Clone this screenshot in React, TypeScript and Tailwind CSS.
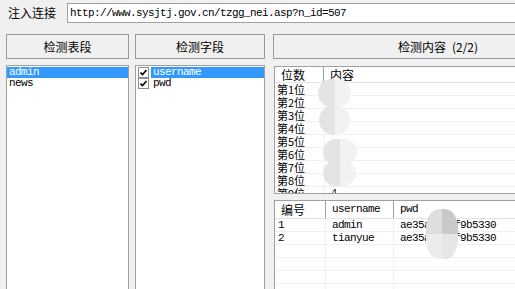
import React from "react";

const cjk = "font-['Noto_Sans_CJK_SC','Noto_Sans',sans-serif] tracking-normal";
const mono = "text-[11px] tracking-[-0.6px]";

function Blob({ className }: { className: string }) {
  // pixelated blur patch that hides part of the data
  return (
    <div className={`absolute overflow-hidden rounded-full ${className}`}>
      <div className="flex h-full w-full">
        <div className="h-full w-1/2 bg-[#e4e4e4]" />
        <div className="h-full w-1/2 bg-[#f2f2f2]" />
      </div>
    </div>
  );
}

export default function App() {
  const tables = ["admin", "news"];
  const fields = ["username", "pwd"];
  const bits = ["第1位", "第2位", "第3位", "第4位", "第5位", "第6位", "第7位", "第8位", "第9位"];
  const rows = [
    { id: "1", user: "admin", pwd: "ae35ad4c7f9b5330" },
    { id: "2", user: "tianyue", pwd: "ae35ad4c7f9b5330" },
  ];

  return (
    <div className="w-[515px] h-[289px] overflow-hidden bg-[#f0f0f0] text-black text-[12px] font-['Liberation_Mono','DejaVu_Sans_Mono',monospace]">
      <div className="flex items-center pt-[3px] pl-[8px]">
        <span className={`w-[59px] shrink-0 leading-[20px] ${cjk}`}>注入连接</span>
        <div className={`h-[20px] w-[600px] shrink-0 border border-[#a0a0a0] bg-white pl-[2px] leading-[18px] ${mono}`}>
          http://www.sysjtj.gov.cn/tzgg_nei.asp?n_id=507
        </div>
      </div>

      <div className="mt-[11px] flex pl-[6px]">
        <div className="w-[123px] shrink-0">
          <div className={`flex h-[25px] items-center justify-center border border-[#999] ${cjk}`}>检测表段</div>
          <div className="mt-[6px] h-[300px] border border-[#a0a0a0] bg-white pt-[1px]">
            {tables.map((t, i) => (
              <div
                key={t}
                className={`h-[11px] pl-[2px] leading-[11px] ${mono} ${i === 0 ? "bg-[#3399ff] text-white" : ""}`}
              >
                {t}
              </div>
            ))}
          </div>
        </div>

        <div className="ml-[6px] w-[130px] shrink-0">
          <div className={`flex h-[25px] items-center justify-center border border-[#999] ${cjk}`}>检测字段</div>
          <div className="mt-[6px] h-[300px] border border-[#a0a0a0] bg-white pt-[1px] pl-[2px]">
            {fields.map((f, i) => (
              <div key={f} className="flex h-[11px] items-center">
                <span className="flex h-[11px] w-[11px] shrink-0 items-center justify-center border border-[#8f8f8f] bg-white">
                  <svg width="7" height="7" viewBox="0 0 7 7">
                    <path d="M0.5 3.5 L2.5 5.5 L6.5 1" stroke="#000" strokeWidth="1.6" fill="none" />
                  </svg>
                </span>
                <span
                  className={`ml-[2px] h-[11px] flex-1 pl-[2px] leading-[11px] ${mono} ${i === 0 ? "bg-[#3399ff] text-white" : ""}`}
                >
                  {f}
                </span>
              </div>
            ))}
          </div>
        </div>

        <div className="ml-[8px] w-[330px] shrink-0">
          <div className={`flex h-[25px] items-center justify-center border border-[#999] ${cjk}`}>
            检测内容 <span className="ml-[6px]">(2/2)</span>
          </div>

          <div className="relative ml-[1px] mt-[7px] h-[128px] overflow-hidden border border-[#a0a0a0] bg-white">
            <div className={`flex h-[16px] border-b border-[#e3e3e3] leading-[15px] ${cjk}`}>
              <div className="w-[49px] shrink-0 border-r border-[#a0a0a0] pl-[6px]">位数</div>
              <div className="pl-[6px]">内容</div>
            </div>
            {bits.map((b, i) => (
              <div key={b} className="flex h-[13px] border-b border-[#f0f0f0] leading-[13px]">
                <div className={`w-[50px] shrink-0 border-r border-[#f0f0f0] pl-[2px] text-[11px] ${cjk}`}>{b}</div>
                <div className="pl-[6px] text-[10px]">{i === 8 ? "4" : ""}</div>
              </div>
            ))}
            <Blob className="left-[43px] top-[12px] h-[28px] w-[33px]" />
            <Blob className="left-[44px] top-[38px] h-[30px] w-[31px]" />
            <Blob className="left-[48px] top-[72px] h-[26px] w-[34px]" />
            <Blob className="left-[48px] top-[94px] h-[25px] w-[33px]" />
          </div>

          <div className="relative ml-[1px] mt-[6px] h-[120px] overflow-hidden border border-[#a0a0a0] bg-white">
            <div className="flex h-[18px] border-b border-[#e3e3e3] leading-[17px]">
              <div className={`w-[51px] shrink-0 border-r border-[#a0a0a0] pl-[6px] ${cjk}`}>编号</div>
              <div className={`w-[68px] shrink-0 border-r border-[#a0a0a0] pl-[6px] ${mono}`}>username</div>
              <div className={`pl-[6px] ${mono}`}>pwd</div>
            </div>
            {[0, 1, 2, 3, 4, 5].map((i) => {
              const r = rows[i];
              return (
                <div key={i} className={`flex h-[13px] border-b border-[#f0f0f0] leading-[13px] ${mono}`}>
                  <div className="w-[51px] shrink-0 border-r border-[#f0f0f0] pl-[3px]">{r ? r.id : ""}</div>
                  <div className="w-[68px] shrink-0 border-r border-[#f0f0f0] pl-[6px]">{r ? r.user : ""}</div>
                  <div className="pl-[6px]">{r ? r.pwd : ""}</div>
                </div>
              );
            })}
            <div className="absolute left-[151px] top-[8px] h-[50px] w-[32px] overflow-hidden rounded-[40%]">
              <div className="grid h-full w-full grid-cols-2 grid-rows-2">
                <div className="bg-[#dedede]" />
                <div className="bg-[#c9c9c9]" />
                <div className="bg-[#ececec]" />
                <div className="bg-[#e6e6e6]" />
              </div>
            </div>
          </div>
        </div>
      </div>
    </div>
  );
}
